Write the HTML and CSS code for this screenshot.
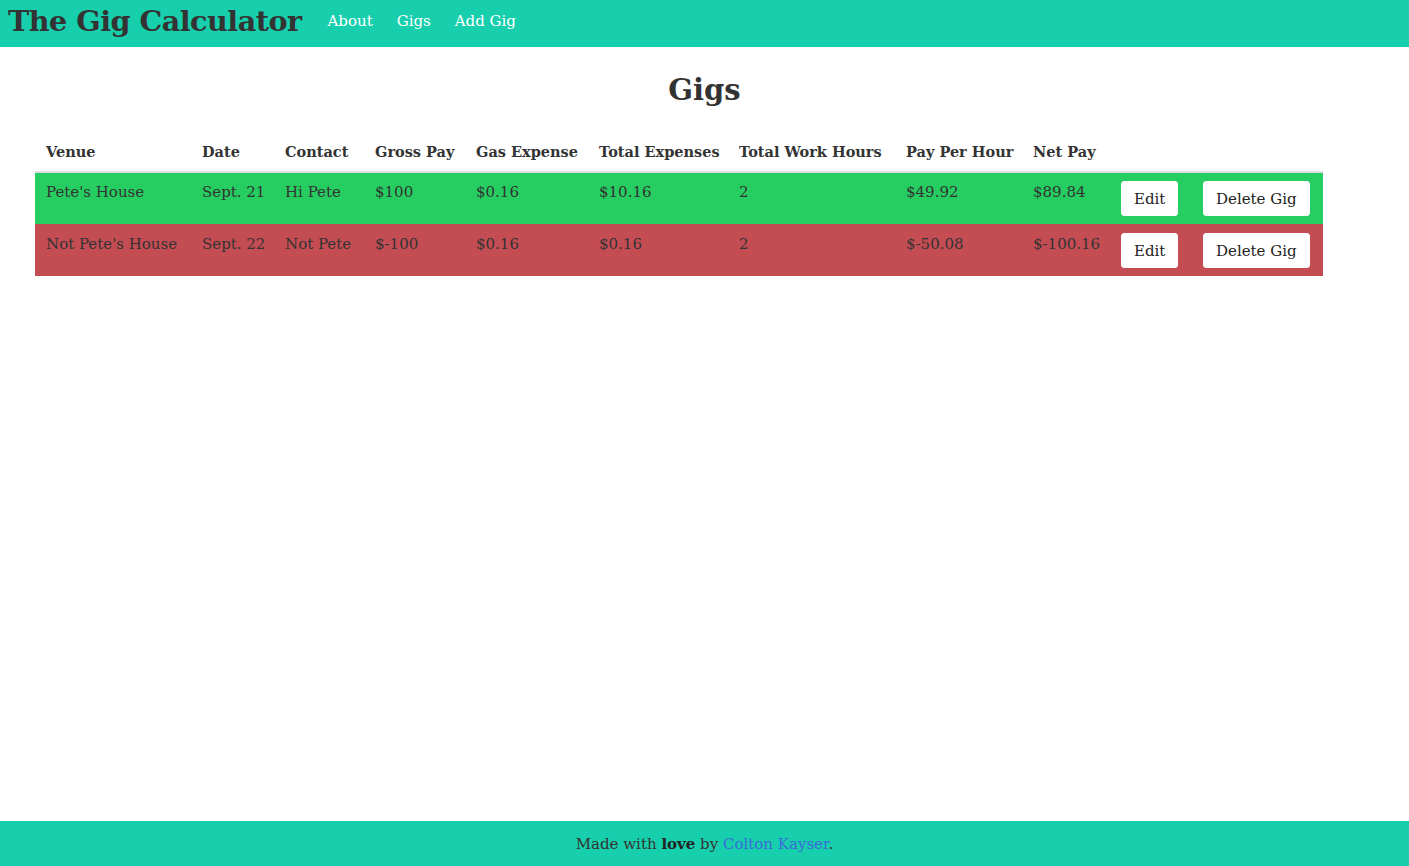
FILE: index.html
```html
<!DOCTYPE html>
<html>
<head>
<meta charset="utf-8">
<title>The Gig Calculator</title>
<link rel="stylesheet" href="styles.css">
</head>
<body>
<div class="page">
  <nav class="navbar">
    <a class="brand" href="#">The Gig Calculator</a>
    <ul class="nav-links">
      <li><a href="#">About</a></li>
      <li><a href="#">Gigs</a></li>
      <li><a href="#">Add Gig</a></li>
    </ul>
  </nav>
  <main class="content">
    <h1 class="title">Gigs</h1>
    <table class="gigs">
      <colgroup>
        <col class="c-venue"><col class="c-date"><col class="c-contact"><col class="c-gross"><col class="c-gas"><col class="c-totexp"><col class="c-hours"><col class="c-pph"><col class="c-net"><col class="c-edit"><col class="c-del">
      </colgroup>
      <thead>
        <tr>
          <th>Venue</th><th>Date</th><th>Contact</th><th>Gross Pay</th><th>Gas Expense</th><th>Total Expenses</th><th>Total Work Hours</th><th>Pay Per Hour</th><th>Net Pay</th><th></th><th></th>
        </tr>
      </thead>
      <tbody>
        <tr class="row-good">
          <td>Pete's House</td><td>Sept. 21</td><td>Hi Pete</td><td>$100</td><td>$0.16</td><td>$10.16</td><td>2</td><td>$49.92</td><td>$89.84</td>
          <td><button class="btn">Edit</button></td><td><button class="btn">Delete Gig</button></td>
        </tr>
        <tr class="row-bad">
          <td>Not Pete's House</td><td>Sept. 22</td><td>Not Pete</td><td>$-100</td><td>$0.16</td><td>$0.16</td><td>2</td><td>$-50.08</td><td>$-100.16</td>
          <td><button class="btn">Edit</button></td><td><button class="btn">Delete Gig</button></td>
        </tr>
      </tbody>
    </table>
  </main>
  <footer class="footer">
    <p>Made with <strong>love</strong> by <a href="#">Colton Kayser</a>.</p>
  </footer>
</div>
</body>
</html>
```
FILE: styles.css
```css
* { box-sizing: border-box; }
html, body { margin: 0; padding: 0; height: 100%; }
body {
  font-family: "DejaVu Serif", "Liberation Serif", serif;
  font-size: 15px;
  color: #333;
  background: #fff;
}
.page {
  min-height: 100vh;
  display: flex;
  flex-direction: column;
}
.navbar {
  height: 47px;
  background: #17cfac;
  display: flex;
  align-items: center;
  padding: 0 8px;
}
.brand {
  font-size: 28.6px;
  font-weight: bold;
  color: #333;
  text-decoration: none;
  margin-top: -5px;
  letter-spacing: -0.5px;
}
.nav-links {
  list-style: none;
  display: flex;
  gap: 24px;
  margin: -6px 0 0 26px;
  padding: 0;
}
.nav-links a {
  color: #fff;
  text-decoration: none;
  font-size: 15px;
}
.content {
  flex: 1;
  padding: 0 35px;
}
.title {
  text-align: center;
  font-size: 29px;
  font-weight: bold;
  margin: 23px 0 23px;
  line-height: 40px;
}
.gigs {
  width: 1288px;
  table-layout: fixed;
  border-collapse: collapse;
}
.c-venue { width: 156px; }
.c-date { width: 83px; }
.c-contact { width: 90px; }
.c-gross { width: 101px; }
.c-gas { width: 123px; }
.c-totexp { width: 140px; }
.c-hours { width: 167px; }
.c-pph { width: 127px; }
.c-net { width: 88px; }
.c-edit { width: 82px; }
.c-del { width: 131px; }
.gigs th {
  text-align: left;
  font-weight: bold;
  font-size: 14.5px;
  padding: 8px 11px;
  vertical-align: bottom;
  border-bottom: 2px solid #ddd;
  white-space: nowrap;
  line-height: 22px;
}
.gigs td {
  padding: 8px 11px;
  vertical-align: top;
  line-height: 22px;
  white-space: nowrap;
  font-size: 15px;
}
.row-good td { background: #26cd61; border-top: 1px solid #26cd61; }
.row-bad td { background: #c44c53; border-top: 1px solid #c44c53; }
.btn {
  font-family: inherit;
  font-size: 15px;
  color: #222;
  background: #fff;
  border: 1px solid #fff;
  border-radius: 3px;
  height: 35px;
  padding: 0 12px;
  cursor: pointer;
}
.footer {
  height: 45px;
  background: #17cfac;
  display: flex;
  align-items: center;
  justify-content: center;
}
.footer p { margin: 0; font-size: 15px; }
.footer strong { color: #222; }
.footer a { color: #3a6bd8; text-decoration: none; }
```
